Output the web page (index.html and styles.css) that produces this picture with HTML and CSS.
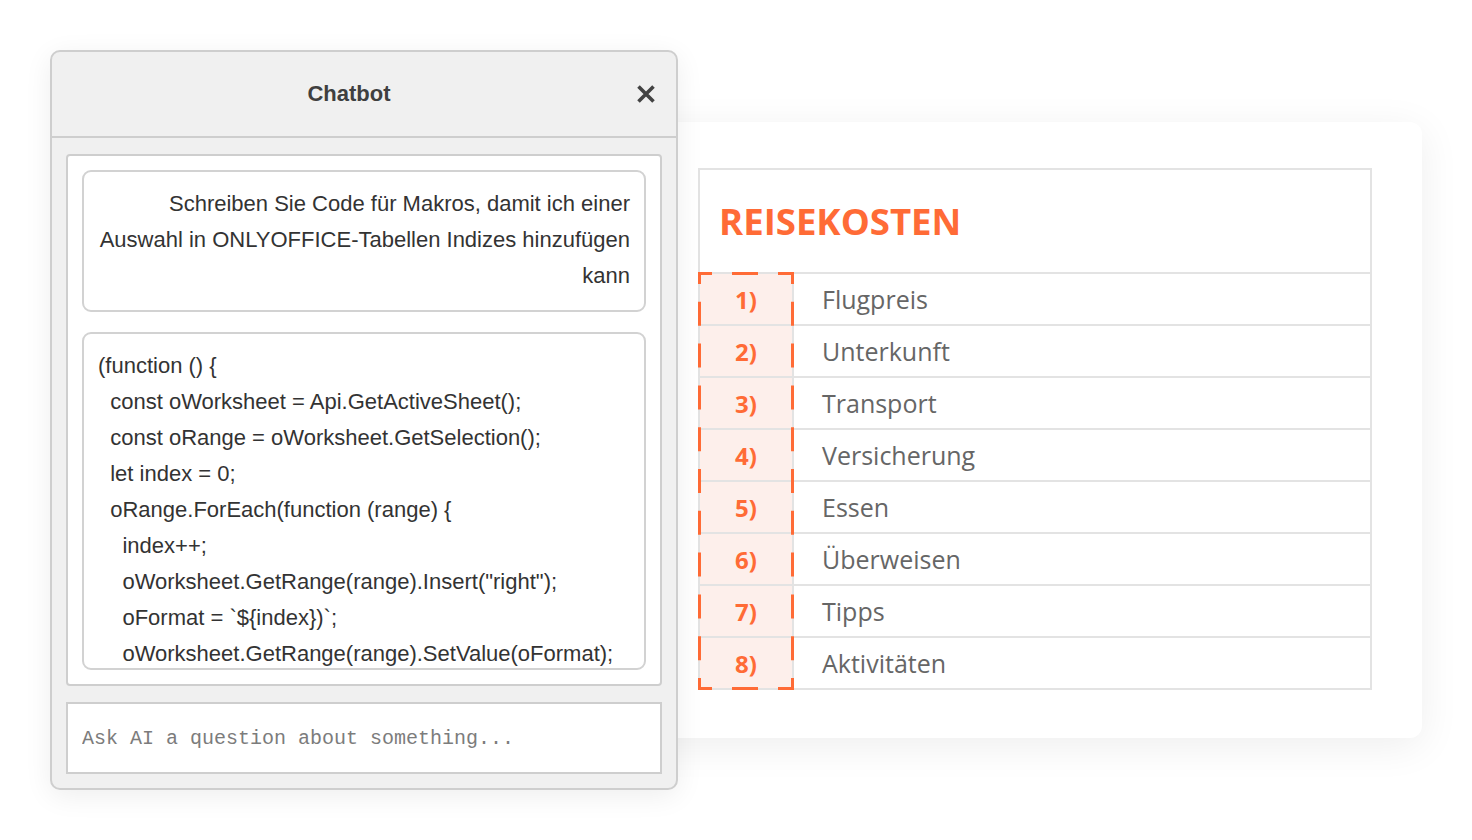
FILE: index.html
```html
<!DOCTYPE html>
<html lang="de">
<head>
<meta charset="utf-8">
<title>Chatbot – Reisekosten</title>
<link rel="stylesheet" href="styles.css">
</head>
<body>
<div class="stage">
  <section class="chatbot">
    <header class="chat-head">
      <h1 class="chat-title">Chatbot</h1>
      <button class="chat-close" aria-label="Schließen">
        <svg width="20" height="20" viewBox="0 0 20 20"><path d="M2.5 2.5 L17.5 17.5 M17.5 2.5 L2.5 17.5" stroke="#434343" stroke-width="3.6" fill="none"/></svg>
      </button>
    </header>
    <div class="chat-body">
      <div class="chat-panel">
        <div class="bubble bubble-user">
          <span class="line">Schreiben Sie Code für Makros, damit ich einer</span>
          <span class="line">Auswahl in ONLYOFFICE-Tabellen Indizes hinzufügen</span>
          <span class="line">kann</span>
        </div>
        <div class="bubble bubble-code">(function () {
  const oWorksheet = Api.GetActiveSheet();
  const oRange = oWorksheet.GetSelection();
  let index = 0;
  oRange.ForEach(function (range) {
    index++;
    oWorksheet.GetRange(range).Insert("right");
    oFormat = `${index})`;
    oWorksheet.GetRange(range).SetValue(oFormat);</div>
      </div>
      <input class="chat-input" type="text" placeholder="Ask AI a question about something...">
    </div>
  </section>

  <section class="card">
    <div class="sheet">
      <div class="sheet-head">REISEKOSTEN</div>
      <div class="row"><div class="num">1)</div><div class="label">Flugpreis</div></div>
      <div class="row"><div class="num">2)</div><div class="label">Unterkunft</div></div>
      <div class="row"><div class="num">3)</div><div class="label">Transport</div></div>
      <div class="row"><div class="num">4)</div><div class="label">Versicherung</div></div>
      <div class="row"><div class="num">5)</div><div class="label">Essen</div></div>
      <div class="row"><div class="num">6)</div><div class="label">Überweisen</div></div>
      <div class="row"><div class="num">7)</div><div class="label">Tipps</div></div>
      <div class="row"><div class="num">8)</div><div class="label">Aktivitäten</div></div>
      <svg class="selection" width="96" height="418" viewBox="0 0 96 418">
        <g stroke="#ff6b36" stroke-width="3" fill="none">
          <line x1="0" y1="1.5" x2="96" y2="1.5" stroke-dasharray="26 20" stroke-dashoffset="12"/>
          <line x1="0" y1="416.5" x2="96" y2="416.5" stroke-dasharray="26 20" stroke-dashoffset="12"/>
          <line x1="1.5" y1="0" x2="1.5" y2="418" stroke-dasharray="24 17.8" stroke-dashoffset="12"/>
          <line x1="94.5" y1="0" x2="94.5" y2="418" stroke-dasharray="24 17.8" stroke-dashoffset="12"/>
        </g>
      </svg>
    </div>
  </section>
</div>
</body>
</html>
```

FILE: styles.css
```css
* { box-sizing: border-box; }

html, body {
  margin: 0;
  padding: 0;
  background: #ffffff;
}

body {
  width: 1472px;
  height: 840px;
  overflow: hidden;
  font-family: "Liberation Sans", Arial, sans-serif;
}

.stage {
  display: flex;
  align-items: flex-start;
  padding: 50px 0 0 50px;
}

/* ---------- Chatbot window ---------- */
.chatbot {
  position: relative;
  z-index: 2;
  width: 628px;
  height: 740px;
  flex: none;
  display: flex;
  flex-direction: column;
  background: #f0f0f0;
  border: 2px solid #cecece;
  border-radius: 10px;
  box-shadow: 0 6px 28px rgba(0, 0, 0, 0.07);
}

.chat-head {
  height: 86px;
  flex: none;
  display: flex;
  align-items: center;
  padding: 0 20px 0 10px;
  border-bottom: 2px solid #cecece;
}

.chat-title {
  flex: 1;
  margin: 0;
  text-align: center;
  font-size: 22px;
  font-weight: bold;
  color: #3f3f3f;
}

.chat-close {
  width: 20px;
  height: 20px;
  padding: 0;
  border: 0;
  background: none;
  display: flex;
}

.chat-body {
  flex: 1;
  display: flex;
  flex-direction: column;
  gap: 16px;
  padding: 16px 14px 14px;
  min-height: 0;
}

.chat-panel {
  flex: 1;
  min-height: 0;
  display: flex;
  flex-direction: column;
  gap: 20px;
  padding: 14px;
  background: #ffffff;
  border: 2px solid #cecece;
  border-radius: 4px;
  overflow: hidden;
}

.bubble {
  border: 2px solid #d2d2d2;
  border-radius: 9px;
  font-size: 22px;
  line-height: 36px;
  color: #333333;
}

.bubble-user {
  flex: none;
  padding: 14px 14px 16px;
  text-align: right;
}

.bubble-user .line {
  display: block;
  white-space: nowrap;
}

.bubble-code {
  flex: 1;
  min-height: 0;
  overflow: hidden;
  padding: 14px 14px 0;
  white-space: pre;
  text-align: left;
}

.chat-input {
  height: 72px;
  flex: none;
  width: 100%;
  margin: 0;
  padding: 0 14px;
  border: 2px solid #cecece;
  border-radius: 0;
  background: #ffffff;
  font-family: "Liberation Mono", "Courier New", monospace;
  font-size: 20px;
  color: #333;
  outline: none;
}

.chat-input::placeholder {
  color: #7c7c7c;
}

/* ---------- Spreadsheet card ---------- */
.card {
  position: relative;
  z-index: 1;
  flex: none;
  width: 794px;
  height: 616px;
  margin-left: -50px;
  margin-top: 72px;
  padding: 46px 50px 0 70px;
  background: #ffffff;
  border-radius: 12px;
  box-shadow: 0 8px 40px rgba(0, 0, 0, 0.07);
}

.sheet {
  position: relative;
  width: 674px;
  border: 2px solid #e3e3e3;
  border-bottom: 0;
  font-family: "Open Sans", "Noto Sans", sans-serif;
}

.sheet-head {
  height: 104px;
  display: flex;
  align-items: center;
  padding-left: 19px;
  border-bottom: 2px solid #e3e3e3;
  font-size: 36.6px;
  font-weight: 700;
  color: #ff6b36;
}

.row {
  height: 52px;
  display: flex;
  border-bottom: 2px solid #e3e3e3;
}

.num {
  width: 94px;
  flex: none;
  display: flex;
  align-items: center;
  justify-content: center;
  background: #fdefeb;
  border-right: 2px solid #e3e3e3;
  font-size: 24px;
  font-weight: 700;
  color: #ff6b36;
}

.label {
  flex: 1;
  display: flex;
  align-items: center;
  padding-left: 28px;
  font-size: 25px;
  color: #666666;
}

.selection {
  position: absolute;
  left: -2px;
  top: 102px;
  display: block;
}
```
